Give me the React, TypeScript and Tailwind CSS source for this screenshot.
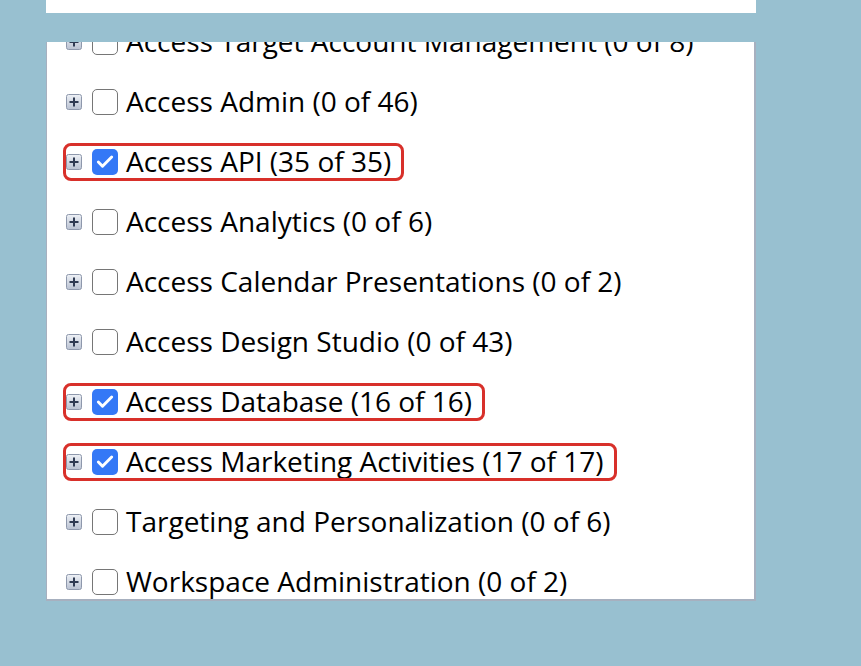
import { Check } from 'lucide-react';

type Permission = {
  label: string;
  checked: boolean;
  flagged: boolean;
};

const permissions: Permission[] = [
  { label: 'Access Target Account Management (0 of 8)', checked: false, flagged: false },
  { label: 'Access Admin (0 of 46)', checked: false, flagged: false },
  { label: 'Access API (35 of 35)', checked: true, flagged: true },
  { label: 'Access Analytics (0 of 6)', checked: false, flagged: false },
  { label: 'Access Calendar Presentations (0 of 2)', checked: false, flagged: false },
  { label: 'Access Design Studio (0 of 43)', checked: false, flagged: false },
  { label: 'Access Database (16 of 16)', checked: true, flagged: true },
  { label: 'Access Marketing Activities (17 of 17)', checked: true, flagged: true },
  { label: 'Targeting and Personalization (0 of 6)', checked: false, flagged: false },
  { label: 'Workspace Administration (0 of 2)', checked: false, flagged: false },
];

function ExpandIcon() {
  return (
    <svg width="16" height="16" viewBox="0 0 16 16" className="shrink-0">
      <defs>
        <linearGradient id="exp" x1="0" y1="0" x2="0" y2="1">
          <stop offset="0" stopColor="#eef1f6" />
          <stop offset="1" stopColor="#b9c1d1" />
        </linearGradient>
      </defs>
      <rect x="0.5" y="0.5" width="15" height="15" rx="2" fill="url(#exp)" stroke="#8e98ac" />
      <path d="M3.5 8h9M8 3.5v9" stroke="#2f3a52" strokeWidth="2" />
    </svg>
  );
}

function Checkbox({ checked }: { checked: boolean }) {
  if (checked) {
    return (
      <span className="ml-[10px] flex h-[26px] w-[26px] shrink-0 items-center justify-center rounded-[5px] bg-[#3478f6]">
        <Check className="h-[20px] w-[20px] text-white" strokeWidth={3.5} />
      </span>
    );
  }
  return <span className="ml-[10px] block h-[26px] w-[26px] shrink-0 rounded-[5px] border-[1.5px] border-[#767676] bg-white" />;
}

function PermissionRow({ item }: { item: Permission }) {
  return (
    <div className="flex h-[60px] items-center pl-[19px]">
      <div className="relative flex items-center">
        {item.flagged && (
          <span className="pointer-events-none absolute -left-[3px] -right-[13px] -top-[6px] -bottom-[6px] rounded-[8px] border-[3px] border-[#d8302a]" />
        )}
        <ExpandIcon />
        <Checkbox checked={item.checked} />
        <span className="ml-[8px] -mt-[2px] whitespace-nowrap text-[28px] leading-none text-black">{item.label}</span>
      </div>
    </div>
  );
}

export default function App() {
  return (
    <div className="h-[666px] w-full overflow-hidden bg-[#98c0d0]" style={{ fontFamily: '"Open Sans", "Noto Sans", sans-serif' }}>
      <div className="ml-[46px] h-[13px] w-[710px] bg-white" />
      <div className="ml-[46px] mt-[29px] h-[559px] w-[710px] overflow-hidden border-l border-b-2 border-r-2 border-[#a7b0bf] bg-white">
        <div className="-mt-[30px]">
          {permissions.map((item) => (
            <PermissionRow key={item.label} item={item} />
          ))}
        </div>
      </div>
    </div>
  );
}
